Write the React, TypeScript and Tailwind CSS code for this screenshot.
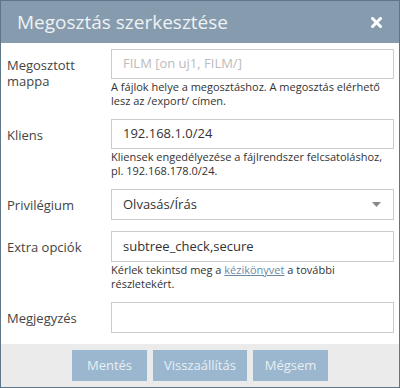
import React from 'react';

const font = { fontFamily: '"Open Sans", "Noto Sans", sans-serif' };

interface RowProps {
  label: React.ReactNode;
  children: React.ReactNode;
  help?: React.ReactNode;
}

const Row: React.FC<RowProps> = ({ label, children, help }) => (
  <div className="flex mb-[11px]">
    <div className="w-[104px] shrink-0 pt-[8px] text-[13px] leading-[16px] text-[#444]">{label}</div>
    <div className="flex-1 min-w-0">
      {children}
      {help && <div className="text-[11px] leading-[14px] text-[#333] pt-[1px]">{help}</div>}
    </div>
  </div>
);

const inputCls =
  'h-[30px] w-full border border-[#ccc] bg-white px-[11px] text-[13px] text-[#333] flex items-center';

export default function App() {
  return (
    <div style={font} className="w-[400px] h-[388px] border border-[#5f7588] bg-white flex flex-col overflow-hidden">
      {/* Header */}
      <div className="h-[42px] bg-[#869bad] flex items-center justify-between pl-[16px] pr-[17px] shrink-0">
        <span className="text-[19px] text-[#eef2f5] font-normal">Megosztás szerkesztése</span>
        <svg width="11" height="11" viewBox="0 0 11 11">
          <path d="M1.5 1.5 L9.5 9.5 M9.5 1.5 L1.5 9.5" stroke="#ffffff" strokeWidth="3" strokeLinecap="square" />
        </svg>
      </div>

      {/* Form */}
      <div className="flex-1 pt-[6px] pl-[6px] pr-[5px]">
        <Row
          label={<>Megosztott<br />mappa</>}
          help={<>A fájlok helye a megosztáshoz. A megosztás elérhető lesz az /export/ címen.</>}
        >
          <div className={inputCls}>
            <span className="text-[#bbb]">FILM [on uj1, FILM/]</span>
          </div>
        </Row>
        <Row
          label="Kliens"
          help={<>Kliensek engedélyezése a fájlrendszer felcsatoláshoz, pl. 192.168.178.0/24.</>}
        >
          <div className={inputCls}>192.168.1.0/24</div>
        </Row>
        <Row label="Privilégium">
          <div className={`${inputCls} h-[31px] justify-between`}>
            <span>Olvasás/Írás</span>
            <svg width="9" height="5" viewBox="0 0 9 5" className="mr-[1px]">
              <path d="M0 0 L9 0 L4.5 5 Z" fill="#888" />
            </svg>
          </div>
        </Row>
        <Row
          label="Extra opciók"
          help={
            <>
              Kérlek tekintsd meg a{' '}
              <span className="text-[#6d8aa5] underline">kézikönyvet</span> a további részletekért.
            </>
          }
        >
          <div className={`${inputCls} h-[31px]`}>subtree_check,secure</div>
        </Row>
        <Row label="Megjegyzés">
          <div className={`${inputCls} h-[31px]`}></div>
        </Row>
      </div>

      {/* Footer */}
      <div className="h-[45px] bg-[#ebebeb] flex justify-center items-start pt-[6px] gap-[6px] shrink-0">
        <button className="w-[75px] h-[31px] bg-[#9ab7cf] text-[13px] text-[#e9eff5]">Mentés</button>
        <button className="w-[94px] h-[31px] bg-[#9ab7cf] text-[13px] text-[#e9eff5]">Visszaállítás</button>
        <button className="w-[75px] h-[31px] bg-[#9ab7cf] text-[13px] text-[#e9eff5]">Mégsem</button>
      </div>
    </div>
  );
}
